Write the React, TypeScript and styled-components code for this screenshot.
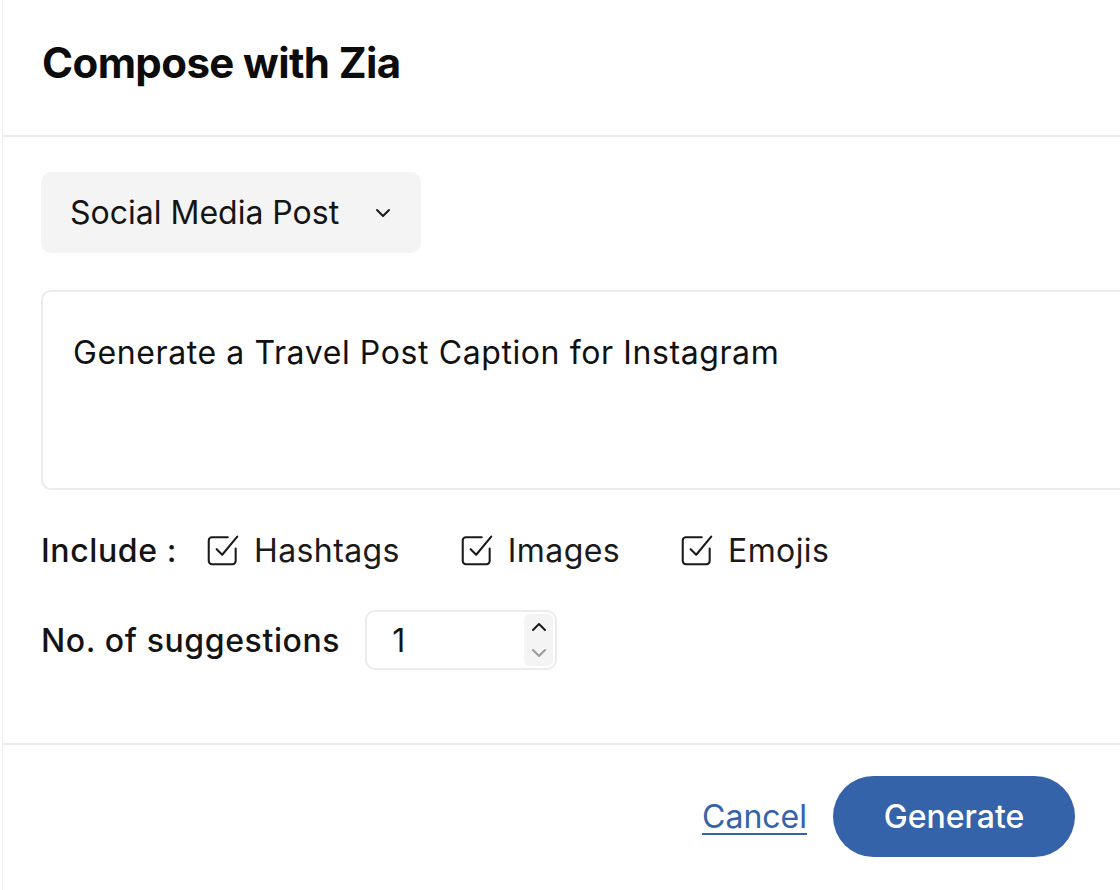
import styled, { createGlobalStyle } from 'styled-components';

const GlobalStyle = createGlobalStyle`
  html, body {
    margin: 0;
    padding: 0;
    background: #ffffff;
  }
  body {
    font-family: Inter, 'Noto Sans', sans-serif;
    color: #111111;
  }
`;

function CheckIcon() {
  return (
    <svg width='38' height='38' viewBox='0 0 24 24' fill='none' stroke='#1a1a1a' strokeWidth='1.3' strokeLinecap='round' strokeLinejoin='round'>
      <path d='M20 11v8a2 2 0 0 1-2 2H5a2 2 0 0 1-2-2V6a2 2 0 0 1 2-2h10' />
      <path d='m8 11.5 3.5 3.5L21 3.5' />
    </svg>
  );
}

function Chevron({ up, color }: { up?: boolean; color: string }) {
  return (
    <svg width='16' height='10' viewBox='0 0 16 10' fill='none' stroke={color} strokeWidth='2' strokeLinecap='round' strokeLinejoin='round'>
      <path d={up ? 'M2 8 8 2l6 6' : 'M2 2l6 6 6-6'} />
    </svg>
  );
}

function App() {
  const options = ['Hashtags', 'Images', 'Emojis'];
  return (
    <>
      <GlobalStyle />
      <Dialog>
        <Header>
          <h1>Compose with Zia</h1>
        </Header>

        <Body>
          <Select>
            <span>Social Media Post</span>
            <Chevron color='#1a1a1a' />
          </Select>

          <Prompt>Generate a Travel Post Caption for Instagram</Prompt>

          <IncludeRow>
            <Label>Include :</Label>
            <Options>
              {options.map((o) => (
                <Option key={o}>
                  <CheckIcon />
                  <span>{o}</span>
                </Option>
              ))}
            </Options>
          </IncludeRow>

          <SuggestionRow>
            <Label>No. of suggestions</Label>
            <NumberBox>
              <span>1</span>
              <Spinner>
                <Chevron up color='#1a1a1a' />
                <Chevron color='#9a9a9a' />
              </Spinner>
            </NumberBox>
          </SuggestionRow>
        </Body>

        <Footer>
          <CancelLink href='#'>Cancel</CancelLink>
          <GenerateButton>Generate</GenerateButton>
        </Footer>
      </Dialog>
    </>
  );
}

export default App;

const Dialog = styled.div`
  width: 1118px;
  height: 890px;
  margin-left: 2px;
  border-left: 1px solid #f3f3f3;
  display: flex;
  flex-direction: column;
  overflow: hidden;
`;

const Header = styled.div`
  height: 135px;
  border-bottom: 2px solid #ececec;
  padding-left: 39px;
  display: flex;
  align-items: flex-start;
  h1 {
    margin: 37px 0 0;
    font-size: 42px;
    font-weight: 700;
    letter-spacing: -0.6px;
    color: #0c0c0c;
  }
`;

const Body = styled.div`
  padding: 35px 0 73px 38px;
  border-bottom: 2px solid #ececec;
`;

const Select = styled.div`
  width: 380px;
  height: 81px;
  box-sizing: border-box;
  background: #f4f4f4;
  border-radius: 10px;
  display: flex;
  align-items: center;
  justify-content: space-between;
  padding: 0 30px 0 29px;
  font-size: 32px;
  color: #141414;
  margin-bottom: 37px;
`;

const Prompt = styled.div`
  height: 200px;
  width: 1200px;
  box-sizing: border-box;
  border: 2px solid #ececec;
  border-radius: 10px;
  padding: 41px 0 0 30px;
  font-size: 32px;
  letter-spacing: 0.6px;
  color: #111111;
  margin-bottom: 38px;
`;

const IncludeRow = styled.div`
  display: flex;
  align-items: center;
  gap: 27px;
  height: 44px;
  margin-bottom: 38px;
`;

const SuggestionRow = styled.div`
  display: flex;
  align-items: center;
  gap: 25px;
`;

const Label = styled.div`
  font-size: 32px;
  font-weight: 500;
  letter-spacing: 0.6px;
  color: #141414;
`;

const Options = styled.div`
  display: flex;
  align-items: center;
  gap: 58px;
`;

const Option = styled.label`
  display: flex;
  align-items: center;
  gap: 12px;
  font-size: 32px;
  letter-spacing: 0.4px;
  color: #1a1a1a;
`;

const NumberBox = styled.div`
  width: 192px;
  height: 60px;
  box-sizing: border-box;
  border: 2px solid #ececec;
  border-radius: 10px;
  display: flex;
  align-items: center;
  justify-content: space-between;
  padding: 0 2px 0 25px;
  font-size: 32px;
  color: #141414;
`;

const Spinner = styled.div`
  height: 52px;
  width: 29px;
  background: #f4f4f4;
  border-radius: 6px;
  display: flex;
  flex-direction: column;
  align-items: center;
  justify-content: space-around;
`;

const Footer = styled.div`
  display: flex;
  justify-content: flex-end;
  align-items: center;
  gap: 26px;
  padding: 31px 46px 0 0;
`;

const CancelLink = styled.a`
  font-size: 32px;
  color: #3563a9;
  text-decoration: underline;
  text-underline-offset: 5px;
  text-decoration-thickness: 2px;
`;

const GenerateButton = styled.button`
  width: 242px;
  height: 81px;
  border: none;
  border-radius: 41px;
  background: #3563a9;
  color: #ffffff;
  font-family: Inter, 'Noto Sans', sans-serif;
  font-size: 32px;
  font-weight: 500;
`;
